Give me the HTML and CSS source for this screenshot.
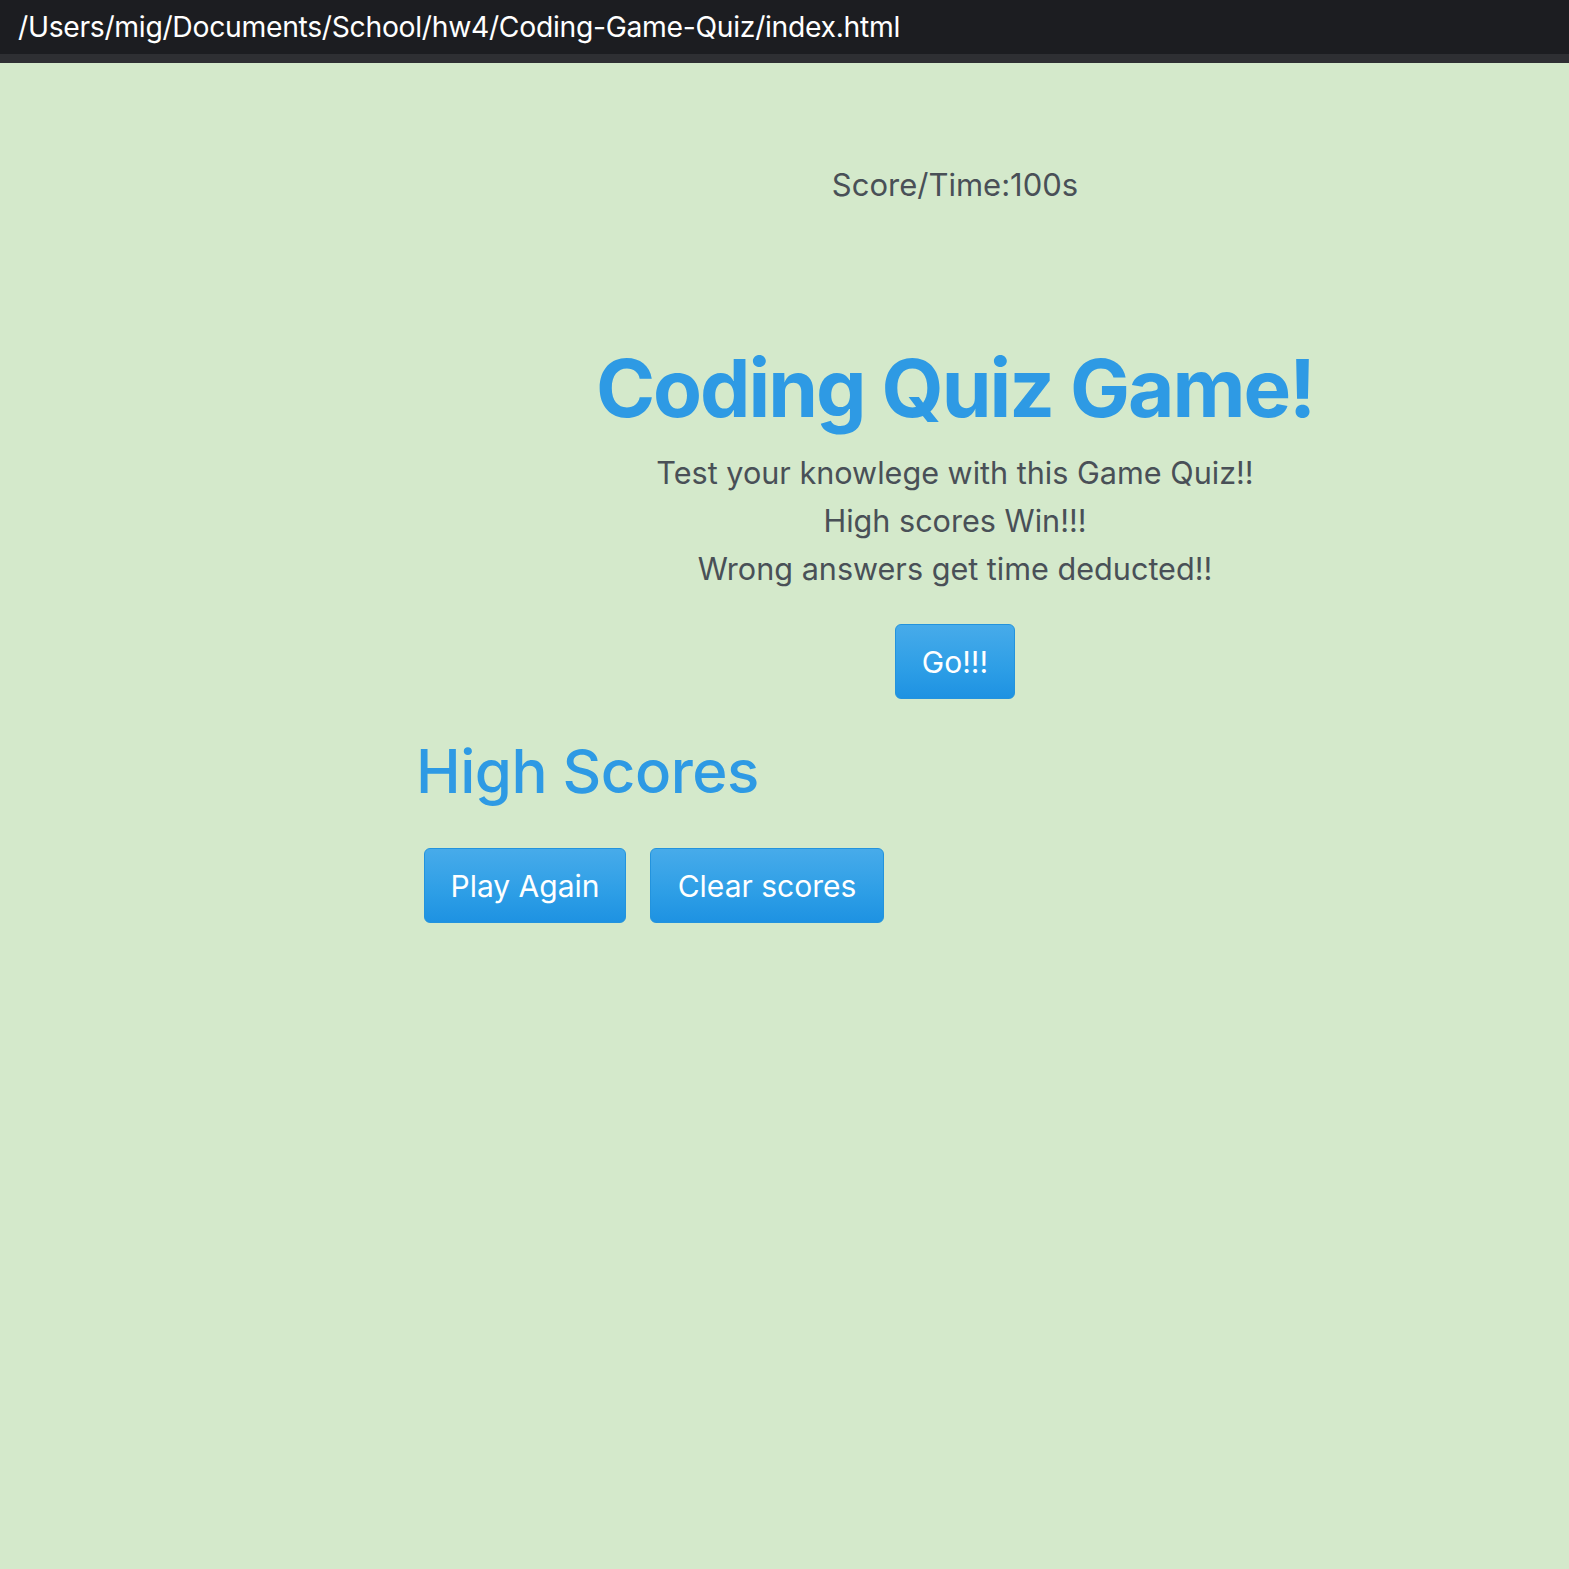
FILE: index.html
```html
<!DOCTYPE html>
<html>
<head>
<meta charset="utf-8">
<link rel="stylesheet" href="styles.css">
</head>
<body>
<div class="titlebar">/Users/mig/Documents/School/hw4/Coding-Game-Quiz/index.html</div>
<div class="strip"></div>
<main class="page">
  <div class="score">Score/Time:100s</div>
  <section class="intro">
    <h1 class="title">Coding Quiz Game!</h1>
    <p class="line">Test your knowlege with this Game Quiz!!</p>
    <p class="line">High scores Win!!!</p>
    <p class="line">Wrong answers get time deducted!!</p>
    <button class="btn btn-go">Go!!!</button>
  </section>
  <section class="scores">
    <h2 class="scores-title">High Scores</h2>
    <div class="actions">
      <button class="btn">Play Again</button>
      <button class="btn">Clear scores</button>
    </div>
  </section>
</main>
</body>
</html>
```

FILE: styles.css
```css
* { box-sizing: border-box; }
html, body { margin: 0; padding: 0; }
body {
  background: #d4e9cb;
  font-family: Inter, "Noto Sans", sans-serif;
  color: #495057;
  min-height: 1569px;
}
.titlebar {
  background: #1c1d21;
  color: #ffffff;
  height: 54px;
  padding-left: 18px;
  font-size: 28.3px;
  line-height: 54px;
  letter-spacing: -0.3px;
}
.strip {
  height: 9px;
  background: #2e2f33;
}
.page {
  width: 1078px;
  margin-left: 416px;
}
.score {
  text-align: center;
  font-size: 31px;
  line-height: 40px;
  padding-top: 102px;
}
.intro {
  text-align: center;
  padding-top: 133px;
}
.title {
  margin: 0 0 11px;
  color: #2e9ae4;
  font-size: 80px;
  font-weight: 700;
  line-height: 100px;
  letter-spacing: -2px;
}
.line {
  margin: 0;
  font-size: 30.6px;
  line-height: 48px;
}
.btn {
  font-family: Inter, "Noto Sans", sans-serif;
  font-size: 30px;
  color: #ffffff;
  background: linear-gradient(#47abea, #2d9ee6 60%, #1e92e2);
  border: 1px solid #2393dd;
  border-radius: 6px;
  height: 75px;
  padding: 0;
  cursor: pointer;
}
.btn-go {
  margin-top: 31px;
  width: 120px;
}
.scores {
  padding-top: 32px;
}
.scores-title {
  margin: 0;
  color: #2e9ae4;
  font-size: 60px;
  font-weight: 500;
  line-height: 80px;
  letter-spacing: -0.5px;
}
.actions {
  display: flex;
  gap: 24px;
  padding-left: 8px;
  margin-top: 37px;
}
.actions .btn:first-child { width: 202px; }
.actions .btn:last-child { width: 234px; }
```
